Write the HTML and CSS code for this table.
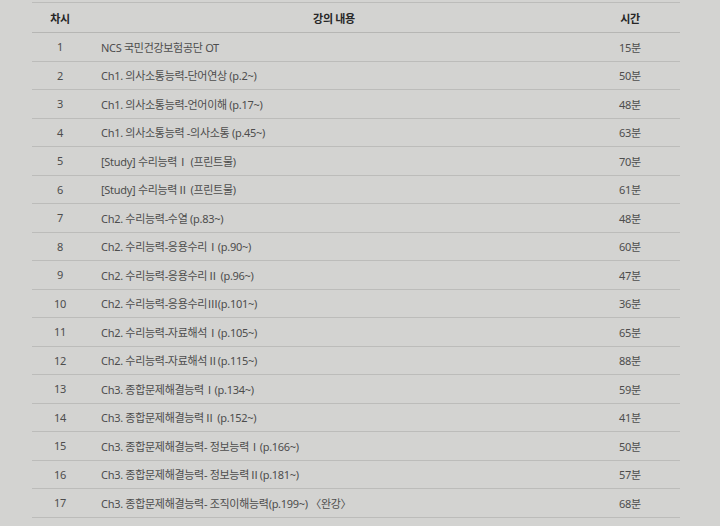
FILE: index.html
```html
<!DOCTYPE html>
<html lang="ko">
<head>
    <meta charset="UTF-8">
    <meta name="viewport" content="width=device-width, initial-scale=1.0">
    <title>강의 목록</title>
    <link rel="stylesheet" href="styles.css">
</head>
<body>

<div class="lecture-box">
    <table class="lecture-table">
        <thead>
            <tr>
                <th class="col-no">차시</th>
                <th class="col-title">강의 내용</th>
                <th class="col-time">시간</th>
            </tr>
        </thead>
        <tbody>
            <tr><td class="col-no">1</td><td class="col-title">NCS 국민건강보험공단 OT</td><td class="col-time">15분</td></tr>
            <tr><td class="col-no">2</td><td class="col-title">Ch1. 의사소통능력-단어연상 (p.2~)</td><td class="col-time">50분</td></tr>
            <tr><td class="col-no">3</td><td class="col-title">Ch1. 의사소통능력-언어이해 (p.17~)</td><td class="col-time">48분</td></tr>
            <tr><td class="col-no">4</td><td class="col-title">Ch1. 의사소통능력 -의사소통 (p.45~)</td><td class="col-time">63분</td></tr>
            <tr><td class="col-no">5</td><td class="col-title">[Study] 수리능력Ⅰ (프린트물)</td><td class="col-time">70분</td></tr>
            <tr><td class="col-no">6</td><td class="col-title">[Study] 수리능력Ⅱ (프린트물)</td><td class="col-time">61분</td></tr>
            <tr><td class="col-no">7</td><td class="col-title">Ch2. 수리능력-수열 (p.83~)</td><td class="col-time">48분</td></tr>
            <tr><td class="col-no">8</td><td class="col-title">Ch2. 수리능력-응용수리Ⅰ(p.90~)</td><td class="col-time">60분</td></tr>
            <tr><td class="col-no">9</td><td class="col-title">Ch2. 수리능력-응용수리Ⅱ (p.96~)</td><td class="col-time">47분</td></tr>
            <tr><td class="col-no">10</td><td class="col-title">Ch2. 수리능력-응용수리Ⅲ(p.101~)</td><td class="col-time">36분</td></tr>
            <tr><td class="col-no">11</td><td class="col-title">Ch2. 수리능력-자료해석Ⅰ(p.105~)</td><td class="col-time">65분</td></tr>
            <tr><td class="col-no">12</td><td class="col-title">Ch2. 수리능력-자료해석Ⅱ(p.115~)</td><td class="col-time">88분</td></tr>
            <tr><td class="col-no">13</td><td class="col-title">Ch3. 종합문제해결능력Ⅰ(p.134~)</td><td class="col-time">59분</td></tr>
            <tr><td class="col-no">14</td><td class="col-title">Ch3. 종합문제해결능력Ⅱ (p.152~)</td><td class="col-time">41분</td></tr>
            <tr><td class="col-no">15</td><td class="col-title">Ch3. 종합문제해결능력- 정보능력Ⅰ(p.166~)</td><td class="col-time">50분</td></tr>
            <tr><td class="col-no">16</td><td class="col-title">Ch3. 종합문제해결능력- 정보능력Ⅱ(p.181~)</td><td class="col-time">57분</td></tr>
            <tr><td class="col-no">17</td><td class="col-title">Ch3. 종합문제해결능력- 조직이해능력(p.199~) 〈완강〉</td><td class="col-time">68분</td></tr>
        </tbody>
    </table>
</div>

</body>
</html>
```

FILE: styles.css
```css
body {
    background-color: #d3d3d1;
    color: #4d4d4d;
    font-family: 'Noto Sans', 'Noto Sans CJK KR', sans-serif;
    margin: 0;
    padding: 0;
}

.lecture-box {
    padding: 2px 40px 0 32px;
}

.lecture-table {
    width: 648px;
    border-collapse: collapse;
    border-top: 1px solid #bcbcba;
    font-size: 11px;
    letter-spacing: -0.3px;
}

.lecture-table th {
    height: 29px;
    padding: 0;
    font-weight: bold;
    color: #262626;
    border-bottom: 1px solid #b6b6b4;
}

.lecture-table td {
    height: 27.5px;
    padding: 0;
    border-bottom: 1px solid #bcbcba;
}

.col-no {
    width: 56px;
    text-align: center;
}

.lecture-table th.col-title {
    text-align: center;
}

.lecture-table td.col-title {
    padding-left: 13px;
    text-align: left;
}

.col-time {
    width: 100px;
    text-align: center;
}
```
